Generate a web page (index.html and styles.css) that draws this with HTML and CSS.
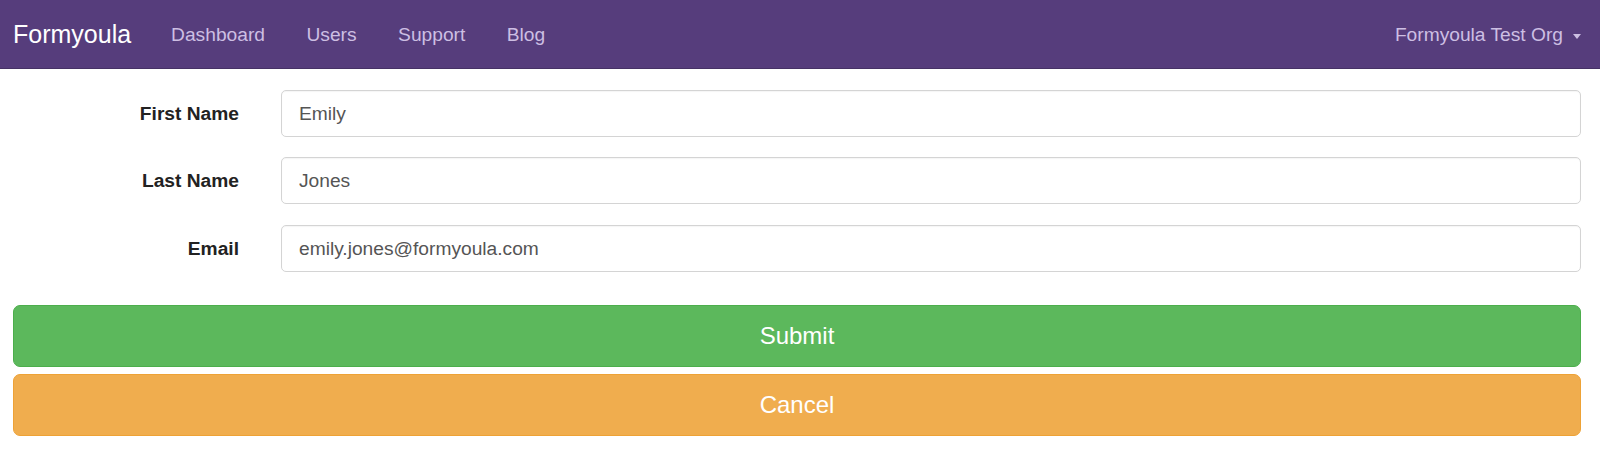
FILE: index.html
```html
<!DOCTYPE html>
<html lang="en">
<head>
<meta charset="utf-8">
<title>Formyoula</title>
<link rel="stylesheet" href="styles.css">
</head>
<body>
<nav class="navbar">
  <a class="brand" href="#">Formyoula</a>
  <ul class="nav">
    <li><a href="#">Dashboard</a></li>
    <li><a href="#">Users</a></li>
    <li><a href="#">Support</a></li>
    <li><a href="#">Blog</a></li>
  </ul>
  <a class="org" href="#">Formyoula Test Org <span class="caret"></span></a>
</nav>
<main class="content">
  <form class="form">
    <div class="row">
      <label class="label">First Name</label>
      <input class="input" type="text" value="Emily">
    </div>
    <div class="row">
      <label class="label">Last Name</label>
      <input class="input" type="text" value="Jones">
    </div>
    <div class="row">
      <label class="label">Email</label>
      <input class="input" type="text" value="emily.jones@formyoula.com">
    </div>
    <div class="actions">
      <button type="button" class="btn btn-success">Submit</button>
      <button type="button" class="btn btn-warning">Cancel</button>
    </div>
  </form>
</main>
</body>
</html>
```

FILE: styles.css
```css
html, body {
  margin: 0;
  padding: 0;
  background: #fff;
  font-family: "Liberation Sans", Arial, sans-serif;
}

.navbar {
  display: flex;
  align-items: flex-start;
  height: 68px;
  background: #563d7c;
  border-bottom: 1px solid #463265;
  padding: 0 19px 0 13px;
}

.brand {
  font-size: 25px;
  line-height: 68px;
  height: 68px;
  color: #fff;
  text-decoration: none;
  margin-right: 40px;
}

.nav {
  display: flex;
  list-style: none;
  margin: 0;
  padding: 0;
  gap: 41.5px;
}

.nav a, .org {
  display: block;
  font-size: 19.2px;
  line-height: 68px;
  padding-top: 1px;
  color: #cdbfe3;
  text-decoration: none;
}

.org {
  margin-left: auto;
  display: flex;
  align-items: center;
}

.caret {
  display: inline-block;
  width: 0;
  height: 0;
  margin-left: 10px;
  margin-top: 2px;
  border-top: 5px solid #cdbfe3;
  border-left: 4.5px solid transparent;
  border-right: 4.5px solid transparent;
}

.content {
  padding: 21px 19px 0 13px;
}

.form {
  display: flex;
  flex-direction: column;
}

.row {
  display: flex;
  align-items: center;
  margin-bottom: 20px;
}

.row:nth-child(2) {
  margin-bottom: 21px;
}

.label {
  width: 226px;
  margin-right: 42px;
  text-align: right;
  font-weight: bold;
  font-size: 19.2px;
  color: #222;
}

.input {
  flex: 1;
  height: 47px;
  box-sizing: border-box;
  border: 1px solid #d4d4d4;
  border-radius: 5px;
  padding: 0 17px;
  font-family: "Liberation Sans", Arial, sans-serif;
  font-size: 19.2px;
  color: #555;
  box-shadow: inset 0 1px 1px rgba(0,0,0,0.04);
  outline: none;
}

.actions {
  display: flex;
  flex-direction: column;
  gap: 7px;
  margin-top: 13px;
}

.btn {
  height: 62px;
  border-radius: 7px;
  font-family: "Liberation Sans", Arial, sans-serif;
  font-size: 24px;
  color: #fff;
  cursor: pointer;
  padding: 0;
}

.btn-success {
  background: #5cb85c;
  border: 1px solid #4cae4c;
}

.btn-warning {
  background: #f0ad4e;
  border: 1px solid #eea236;
}
```
